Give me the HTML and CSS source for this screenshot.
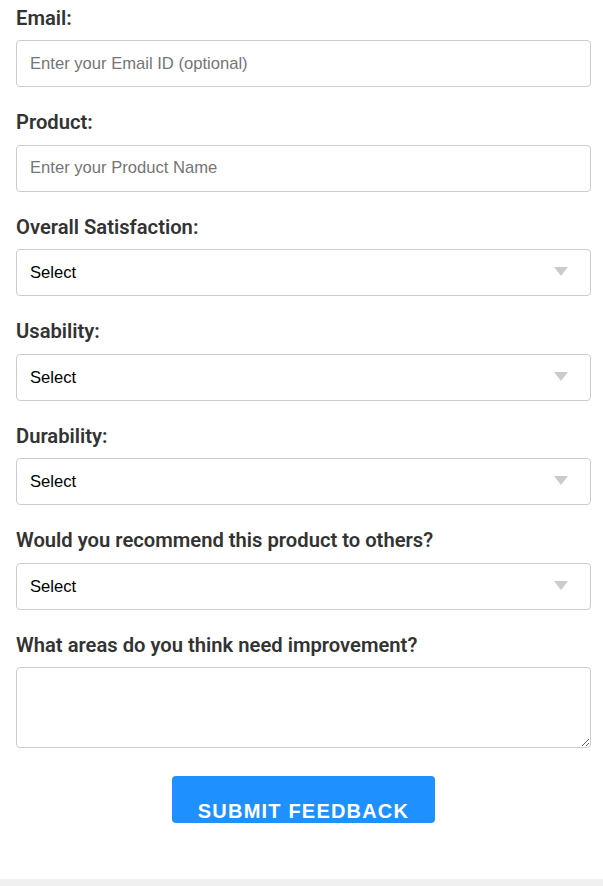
FILE: index.html
```html
<!DOCTYPE html>
<html>
<head>
<meta charset="utf-8">
<link rel="stylesheet" href="styles.css">
</head>
<body>
<div class="page">
  <form class="form">
    <div class="field">
      <label class="label">Email:</label>
      <input class="control" type="text" placeholder="Enter your Email ID (optional)">
    </div>
    <div class="field">
      <label class="label">Product:</label>
      <input class="control" type="text" placeholder="Enter your Product Name">
    </div>
    <div class="field">
      <label class="label">Overall Satisfaction:</label>
      <div class="select-wrap">
        <select class="control select"><option>Select</option></select>
        <span class="arrow"></span>
      </div>
    </div>
    <div class="field">
      <label class="label">Usability:</label>
      <div class="select-wrap">
        <select class="control select"><option>Select</option></select>
        <span class="arrow"></span>
      </div>
    </div>
    <div class="field">
      <label class="label">Durability:</label>
      <div class="select-wrap">
        <select class="control select"><option>Select</option></select>
        <span class="arrow"></span>
      </div>
    </div>
    <div class="field">
      <label class="label">Would you recommend this product to others?</label>
      <div class="select-wrap">
        <select class="control select"><option>Select</option></select>
        <span class="arrow"></span>
      </div>
    </div>
    <div class="field">
      <label class="label">What areas do you think need improvement?</label>
      <textarea class="control area"></textarea>
    </div>
    <div class="actions">
      <button type="button" class="submit">SUBMIT FEEDBACK</button>
    </div>
  </form>
  <div class="footer-strip"></div>
</div>
</body>
</html>
```

FILE: styles.css
```css
* { box-sizing: border-box; }
html, body { margin: 0; padding: 0; background: #fff; }
.page { width: 603px; height: 886px; display: flex; flex-direction: column; }
.form { flex: 1; padding: 6.5px 12px 0 16px; display: flex; flex-direction: column; }
.field { display: flex; flex-direction: column; margin-bottom: 24px; }
.label {
  font-family: Roboto, "Liberation Sans", sans-serif;
  font-weight: 600;
  font-size: 20.2px;
  line-height: 23.5px;
  color: #333;
  margin-bottom: 10px;
}
.control {
  width: 575px;
  height: 47px;
  border: 1px solid #ccc;
  border-radius: 4px;
  padding: 0 13px;
  font-family: "Liberation Sans", Arial, sans-serif;
  font-size: 16.6px;
  color: #000;
  background: #fff;
  outline: none;
  margin: 0;
}
.control::placeholder { color: #757575; }
.select-wrap { position: relative; width: 575px; }
.select { appearance: none; -webkit-appearance: none; }
.arrow {
  position: absolute;
  right: 23px;
  top: 18px;
  width: 0; height: 0;
  border-left: 7px solid transparent;
  border-right: 7px solid transparent;
  border-top: 9px solid #ccc;
  pointer-events: none;
}
.area { height: 81px; resize: vertical; padding: 10px 13px; }
.actions { display: flex; justify-content: center; margin-top: 4px; }
.submit {
  width: 263px;
  height: 47px;
  background: #1e90ff;
  color: #fff;
  border: none;
  border-radius: 4px;
  font-family: "Liberation Sans", Arial, sans-serif;
  font-weight: bold;
  font-size: 20px;
  letter-spacing: 1.2px;
  padding: 23px 0 0 0;
  line-height: 23px;
  overflow: hidden;
}
.footer-strip { height: 7px; background: #f0f0f0; }
```
